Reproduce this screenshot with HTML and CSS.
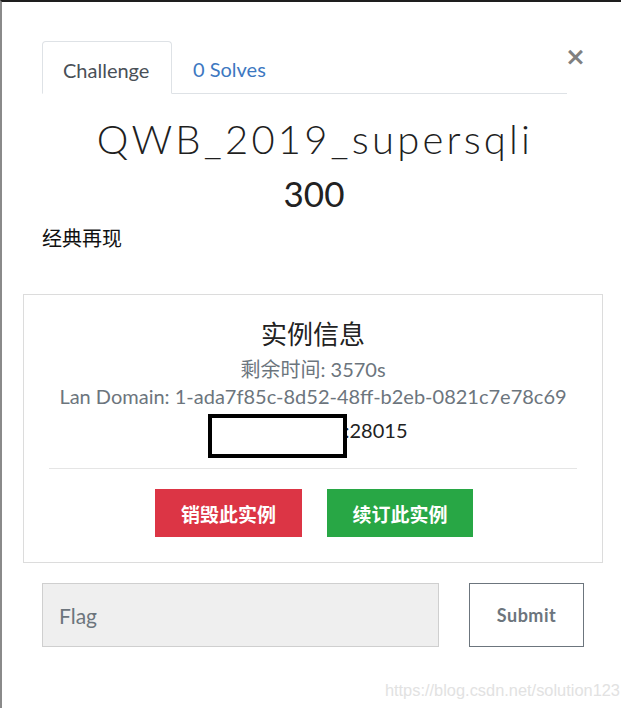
FILE: index.html
```html
<!DOCTYPE html>
<html lang="zh">
<head>
<meta charset="utf-8">
<title>QWB_2019_supersqli</title>
<link rel="stylesheet" href="styles.css">
</head>
<body>
<div class="modal">
  <div class="tabs-row">
    <ul class="tabs">
      <li class="tab active">Challenge</li>
      <li class="tab link">0 Solves</li>
    </ul>
    <span class="close">&times;</span>
  </div>
  <h2 class="title">QWB_2019_supersqli</h2>
  <h3 class="value">300</h3>
  <p class="desc">经典再现</p>
  <div class="card">
    <h4 class="card-title">实例信息</h4>
    <p class="muted">剩余时间: 3570s</p>
    <p class="muted">Lan Domain: 1-ada7f85c-8d52-48ff-b2eb-0821c7e78c69</p>
    <p class="host"><span class="redact"></span><span class="port">:28015</span></p>
    <hr class="sep">
    <div class="actions">
      <button class="btn btn-red">销毁此实例</button>
      <button class="btn btn-green">续订此实例</button>
    </div>
  </div>
  <form class="flag-row">
    <input class="flag-input" type="text" placeholder="Flag">
    <button class="submit" type="button">Submit</button>
  </form>
</div>
<div class="watermark">https://blog.csdn.net/solution123</div>
</body>
</html>
```

FILE: styles.css
```css
html, body {
  margin: 0;
  padding: 0;
  background: #fff;
}
body {
  height: 706px;
  border-top: 2px solid #1e1e1e;
  border-left: 2px solid #8a8a8a;
  font-family: "Lato", "Noto Sans CJK SC", sans-serif;
  color: #212529;
  position: relative;
  overflow: hidden;
}
.modal {
  padding: 39px 37px 0 40px;
}
.tabs-row {
  display: flex;
  align-items: flex-start;
}
.tabs {
  display: flex;
  flex-shrink: 0;
  list-style: none;
  margin: 0;
  padding: 0;
  width: 525px;
  border-bottom: 1px solid #dee2e6;
}
.tab {
  height: 52px;
  box-sizing: border-box;
  padding: 0 21px;
  font-size: 20px;
  line-height: 56px;
}
.tab.active {
  width: 130px;
  border: 1px solid #dee2e6;
  border-bottom-color: #fff;
  border-radius: 4px 4px 0 0;
  color: #495057;
  margin-bottom: -1px;
  height: 53px;
  padding: 0 0 0 20px;
}
.tab.link {
  color: #3d78c1;
}
.close {
  flex-shrink: 0;
  line-height: 1;
  color: #808080;
  margin: 3px -20px 0 -2px;
  font-family: "DejaVu Sans", sans-serif;
  font-weight: bold;
  font-size: 25px;
}
.title {
  margin: 21px 0 0;
  text-align: center;
  font-weight: 300;
  font-size: 40px;
  line-height: 48px;
  letter-spacing: 3.2px;
  color: #1f1f1f;
  padding-left: 4px;
}
.value {
  margin: 10px 0 0;
  text-align: center;
  font-weight: 400;
  font-size: 35px;
  line-height: 40px;
  color: #222;
  padding-left: 2px;
}
.desc {
  margin: 12px 0 0 0;
  font-family: "Noto Sans CJK SC", sans-serif;
  font-size: 20px;
  line-height: 26px;
  color: #111;
}
.card {
  margin: 43px 0 0 -19px;
  width: 580px;
  box-sizing: border-box;
  border: 1px solid #dcdcdc;
  padding: 21px 25px 25px;
  text-align: center;
}
.card-title {
  margin: 0 0 6px;
  font-family: "Noto Sans CJK SC", sans-serif;
  font-weight: 400;
  font-size: 26px;
  line-height: 34px;
  color: #222;
}
.muted {
  margin: 0;
  font-size: 20px;
  line-height: 27px;
  color: #6c757d;
  font-family: "Lato", "Noto Sans CJK SC", sans-serif;
}
.host {
  display: flex;
  justify-content: center;
  align-items: flex-start;
  margin: 4px 0 0;
  font-size: 20px;
  color: #222;
}
.redact {
  display: block;
  width: 131px;
  height: 36px;
  border: 4px solid #000;
  margin: 0 -2px 0 -11px;
  background: #fff;
  position: relative;
}
.port {
  line-height: 33px;
}
.sep {
  margin: 10px 0 0;
  border: 0;
  border-top: 1px solid #e5e5e5;
}
.actions {
  display: flex;
  justify-content: center;
  gap: 25px;
  margin-top: 20px;
  padding-left: 2px;
}
.btn {
  height: 48px;
  border: 0;
  color: #fff;
  font-family: "Noto Sans CJK SC", sans-serif;
  font-weight: 700;
  font-size: 19px;
  padding: 0;
}
.btn-red {
  width: 147px;
  background: #dc3545;
}
.btn-green {
  width: 146px;
  background: #28a745;
}
.flag-row {
  display: flex;
  gap: 30px;
  margin: 20px 0 0 0;
}
.flag-input {
  width: 397px;
  height: 64px;
  box-sizing: border-box;
  border: 1px solid #cfcfcf;
  background: #efefef;
  padding: 0 16px;
  font-family: "Lato", sans-serif;
  font-size: 21px;
  margin: 0;
}
.flag-input::placeholder {
  color: #6c757d;
}
.submit {
  width: 115px;
  height: 64px;
  box-sizing: border-box;
  border: 1px solid #6c757d;
  background: #fff;
  color: #6c757d;
  font-family: "Lato", sans-serif;
  font-weight: 700;
  font-size: 18px;
  margin: 0;
  letter-spacing: 0.5px;
}
.watermark {
  position: absolute;
  right: 1px;
  bottom: 8px;
  font-family: "Liberation Sans", sans-serif;
  font-size: 16.4px;
  color: #e2e2e2;
}
```
